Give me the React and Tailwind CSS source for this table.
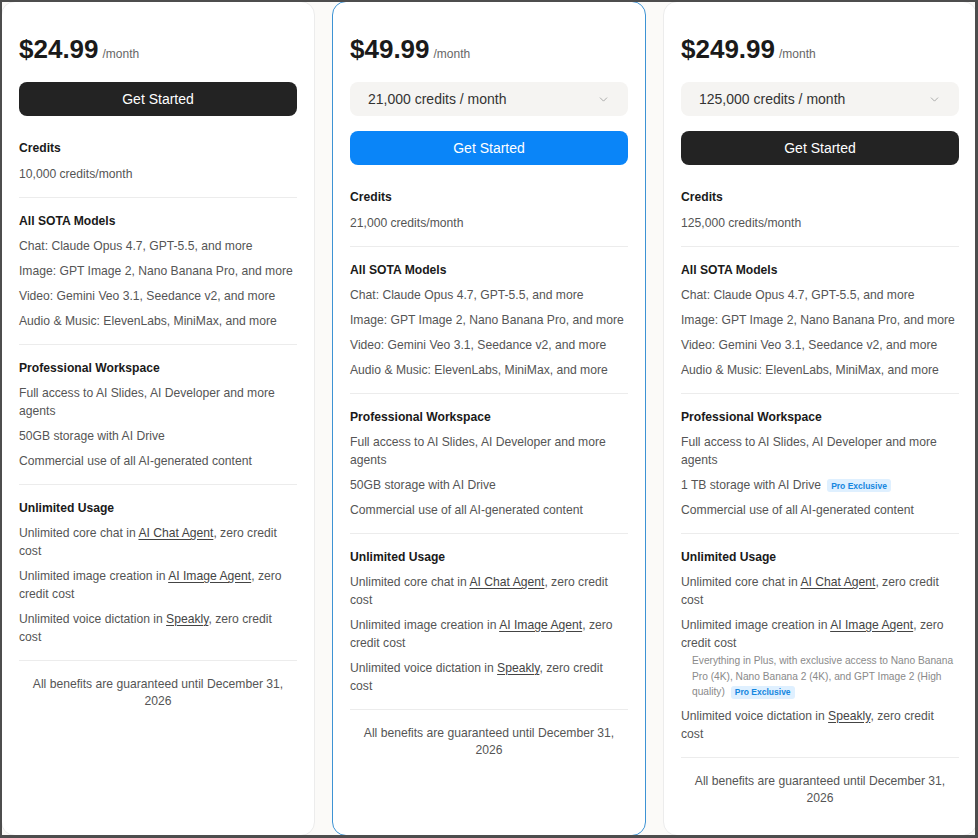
import React from "react";
import { ChevronDown } from "lucide-react";

const Badge = () => (
  <span className="inline-flex items-center h-[13px] px-[4px] ml-[6px] rounded-[3px] bg-[#dff0ff] text-[#1587e0] text-[8.5px] font-bold leading-none align-middle">
    Pro Exclusive
  </span>
);

const Link = ({ children }) => (
  <span className="underline underline-offset-2 text-[#444]">{children}</span>
);

const Item = ({ children }) => (
  <div className="text-[12.15px] leading-[18px] text-[#555]">{children}</div>
);

const Section = ({ title, first, children }) => (
  <div
    className={
      first
        ? "pt-[23px] pb-[14px]"
        : "border-t border-[#ececec] pt-[14px] pb-[14px]"
    }
  >
    <div className="text-[12.15px] leading-[18px] font-bold text-[#1a1a1a]">
      {title}
    </div>
    <div
      className={`${first ? "mt-[8px]" : "mt-[7px]"} flex flex-col gap-[7px]`}
    >
      {children}
    </div>
  </div>
);

function Card({ price, select, variant, credits, storage, pro }) {
  const cardBorder =
    variant === "blue" ? "border-[#3d93d4]" : "border-[#ececec]";
  const btn =
    variant === "blue"
      ? "bg-[#0a85f8] text-white"
      : "bg-[#232323] text-white";
  return (
    <div
      className={`w-[314px] shrink-0 bg-white border ${cardBorder} rounded-[14px] px-[17px] pt-[31px] flex flex-col`}
    >
      <div className="flex items-baseline h-[32px] leading-[32px]">
        <span className="text-[26px] font-bold text-[#1a1a1a]">{price}</span>
        <span className="ml-[4px] text-[12px] text-[#666]">/month</span>
      </div>
      {select && (
        <div className="mt-[17px] h-[34px] rounded-[8px] bg-[#f5f4f2] pl-[18px] pr-[18px] flex items-center justify-between text-[14px] text-[#333]">
          <span>{select}</span>
          <ChevronDown size={13} strokeWidth={1.5} color="#9a9a9a" />
        </div>
      )}
      <div
        className={`${select ? "mt-[15px]" : "mt-[17px]"} h-[34px] rounded-[8px] ${btn} flex items-center justify-center text-[14px] font-medium`}
      >
        Get Started
      </div>

      <Section title="Credits" first>
        <Item>{credits}</Item>
      </Section>

      <Section title="All SOTA Models">
        <Item>Chat: Claude Opus 4.7, GPT-5.5, and more</Item>
        <Item>Image: GPT Image 2, Nano Banana Pro, and more</Item>
        <Item>Video: Gemini Veo 3.1, Seedance v2, and more</Item>
        <Item>Audio &amp; Music: ElevenLabs, MiniMax, and more</Item>
      </Section>

      <Section title="Professional Workspace">
        <Item>Full access to AI Slides, AI Developer and more agents</Item>
        <Item>
          {storage}
          {pro && <Badge />}
        </Item>
        <Item>Commercial use of all AI-generated content</Item>
      </Section>

      <Section title="Unlimited Usage">
        <Item>
          Unlimited core chat in <Link>AI Chat Agent</Link>, zero credit cost
        </Item>
        <div>
          <Item>
            Unlimited image creation in <Link>AI Image Agent</Link>, zero
            credit cost
          </Item>
          {pro && (
            <div className="mt-[1px] pl-[11px] text-[10.2px] leading-[15.5px] text-[#8a8a8a]">
              Everything in Plus, with exclusive access to Nano Banana Pro
              (4K), Nano Banana 2 (4K), and GPT Image 2 (High quality)
              <Badge />
            </div>
          )}
        </div>
        <Item>
          Unlimited voice dictation in <Link>Speakly</Link>, zero credit cost
        </Item>
      </Section>

      <div className="border-t border-[#ececec] pt-[15px] px-[8px] text-center text-[12.15px] leading-[17px] text-[#555]">
        All benefits are guaranteed until December 31, 2026
      </div>
    </div>
  );
}

export default function App() {
  const cards = [
    {
      price: "$24.99",
      select: null,
      variant: "dark",
      credits: "10,000 credits/month",
      storage: "50GB storage with AI Drive",
      pro: false,
    },
    {
      price: "$49.99",
      select: "21,000 credits / month",
      variant: "blue",
      credits: "21,000 credits/month",
      storage: "50GB storage with AI Drive",
      pro: false,
    },
    {
      price: "$249.99",
      select: "125,000 credits / month",
      variant: "dark",
      credits: "125,000 credits/month",
      storage: "1 TB storage with AI Drive",
      pro: true,
    },
  ];
  return (
    <div
      className="relative w-[978px] h-[838px] overflow-hidden bg-[#fbfaf8]"
      style={{ fontFamily: '"Liberation Sans", Arial, sans-serif' }}
    >
      <div className="flex gap-[17px] h-[836px] pt-[1px] pl-[1px]">
        {cards.map((c, i) => (
          <Card key={i} {...c} />
        ))}
      </div>
      <div className="pointer-events-none absolute inset-0 border-t-2 border-l-2 border-r-[3px] border-b-[3px] border-[#4d4d4d]" />
    </div>
  );
}
